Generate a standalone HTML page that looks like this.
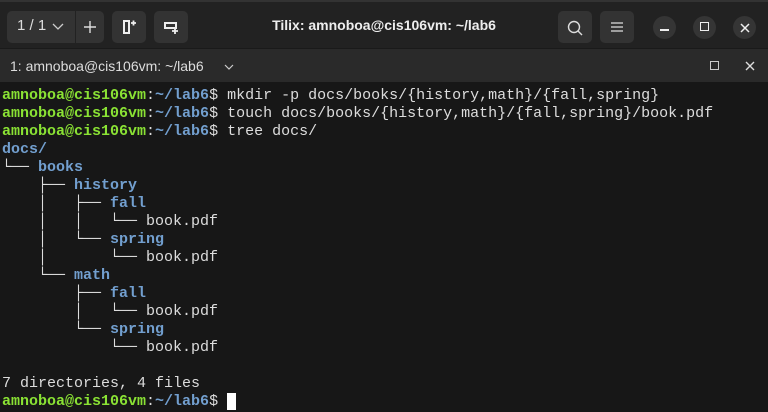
<!DOCTYPE html><html><head><style>
body{margin:0;width:768px;height:412px;background:#171717;overflow:hidden;font-family:"Liberation Sans",sans-serif}
.hb{position:absolute;left:0;top:0;width:768px;height:48px;background:#222;border-top:2px solid #333;box-sizing:border-box}
.btn{position:absolute;top:9px;height:32px;background:#333;border-radius:5px}
.tb{position:absolute;left:0;top:48px;width:768px;height:34px;background:#2a2a2a;border-top:1px solid #1a1a1a;box-sizing:border-box}
.term{position:absolute;left:2px;top:87px;font-family:"Liberation Mono","DejaVu Sans Mono",monospace;font-size:15px;line-height:18px;color:#ddd;white-space:pre;letter-spacing:0}
.g{color:#8ae234;font-weight:bold}.b{color:#729fcf;font-weight:bold}
.circ{position:absolute;top:14px;width:23px;height:23px;border-radius:50%;background:#353535}
</style></head><body>
<div class="hb">
<div class="btn" style="left:7px;width:97px"></div>
<div style="position:absolute;left:75px;top:9px;width:1px;height:32px;background:#222"></div>
<div style="position:absolute;left:17px;top:15px;color:#ddd;font-size:15px">1 / 1</div>
<svg style="position:absolute;left:52px;top:21px" width="12" height="8"><path d="M1 1l5 5 5-5" stroke="#ccc" fill="none" stroke-width="1.3"/></svg>
<svg style="position:absolute;left:83px;top:18px" width="14" height="14"><path d="M7 1v12M1 7h12" stroke="#ddd" stroke-width="1.4"/></svg>
<div class="btn" style="left:112px;width:34px"></div>
<svg style="position:absolute;left:121px;top:17px" width="16" height="16"><path d="M3 2h5v12H3z" stroke="#eee" fill="none" stroke-width="2"/><path d="M10 4h5M12.5 1.5v5" stroke="#eee" stroke-width="1.8"/></svg>
<div class="btn" style="left:154px;width:34px"></div>
<svg style="position:absolute;left:163px;top:17px" width="16" height="16"><path d="M2 4h11v5H2z" stroke="#eee" fill="none" stroke-width="2"/><path d="M9 12h6M12 9v6" stroke="#eee" stroke-width="1.8"/></svg>
<div style="position:absolute;left:0;width:768px;top:15px;text-align:center;color:#eee;font-weight:bold;font-size:14px">Tilix: amnoboa@cis106vm: ~/lab6</div>
<div class="btn" style="left:558px;width:34px"></div>
<svg style="position:absolute;left:566px;top:17px" width="18" height="18"><circle cx="8" cy="8" r="5.5" stroke="#ddd" fill="none" stroke-width="1.4"/><path d="M12 12l4 4" stroke="#ddd" stroke-width="1.4"/></svg>
<div class="btn" style="left:600px;width:34px"></div>
<svg style="position:absolute;left:611px;top:19px" width="12" height="12"><path d="M0 2h12M0 6h12M0 10h12" stroke="#ddd" stroke-width="1.2"/></svg>
<div class="circ" style="left:653px"></div><div style="position:absolute;left:660px;top:27px;width:9px;height:1.5px;background:#eee"></div>
<div class="circ" style="left:693px"></div><div style="position:absolute;left:700px;top:20px;width:7px;height:7px;border:1.5px solid #eee"></div>
<div class="circ" style="left:733px"></div><svg style="position:absolute;left:740px;top:21px" width="10" height="10"><path d="M1 1l8 8M9 1l-8 8" stroke="#eee" stroke-width="1.5"/></svg>
</div>
<div class="tb">
<div style="position:absolute;left:10px;top:9px;color:#ddd;font-size:14px">1: amnoboa@cis106vm: ~/lab6</div>
<svg style="position:absolute;left:224px;top:15px" width="10" height="6"><path d="M1 1l4 4 4-4" stroke="#ccc" fill="none" stroke-width="1.2"/></svg>
<div style="position:absolute;left:710px;top:12px;width:7px;height:7px;border:1px solid #ccc"></div>
<svg style="position:absolute;left:745px;top:12px" width="10" height="10"><path d="M1 1l8 8M9 1l-8 8" stroke="#ddd" stroke-width="1.4"/></svg>
</div>
<div class="term"><span class="g">amnoboa@cis106vm</span>:<span class="b">~/lab6</span>$ mkdir -p docs/books/{history,math}/{fall,spring}
<span class="g">amnoboa@cis106vm</span>:<span class="b">~/lab6</span>$ touch docs/books/{history,math}/{fall,spring}/book.pdf
<span class="g">amnoboa@cis106vm</span>:<span class="b">~/lab6</span>$ tree docs/
<span class="b">docs/</span>
└── <span class="b">books</span>
    ├── <span class="b">history</span>
    │   ├── <span class="b">fall</span>
    │   │   └── book.pdf
    │   └── <span class="b">spring</span>
    │       └── book.pdf
    └── <span class="b">math</span>
        ├── <span class="b">fall</span>
        │   └── book.pdf
        └── <span class="b">spring</span>
            └── book.pdf

7 directories, 4 files
<span class="g">amnoboa@cis106vm</span>:<span class="b">~/lab6</span>$ <span style="background:#fff"> </span></div>
</body></html>
